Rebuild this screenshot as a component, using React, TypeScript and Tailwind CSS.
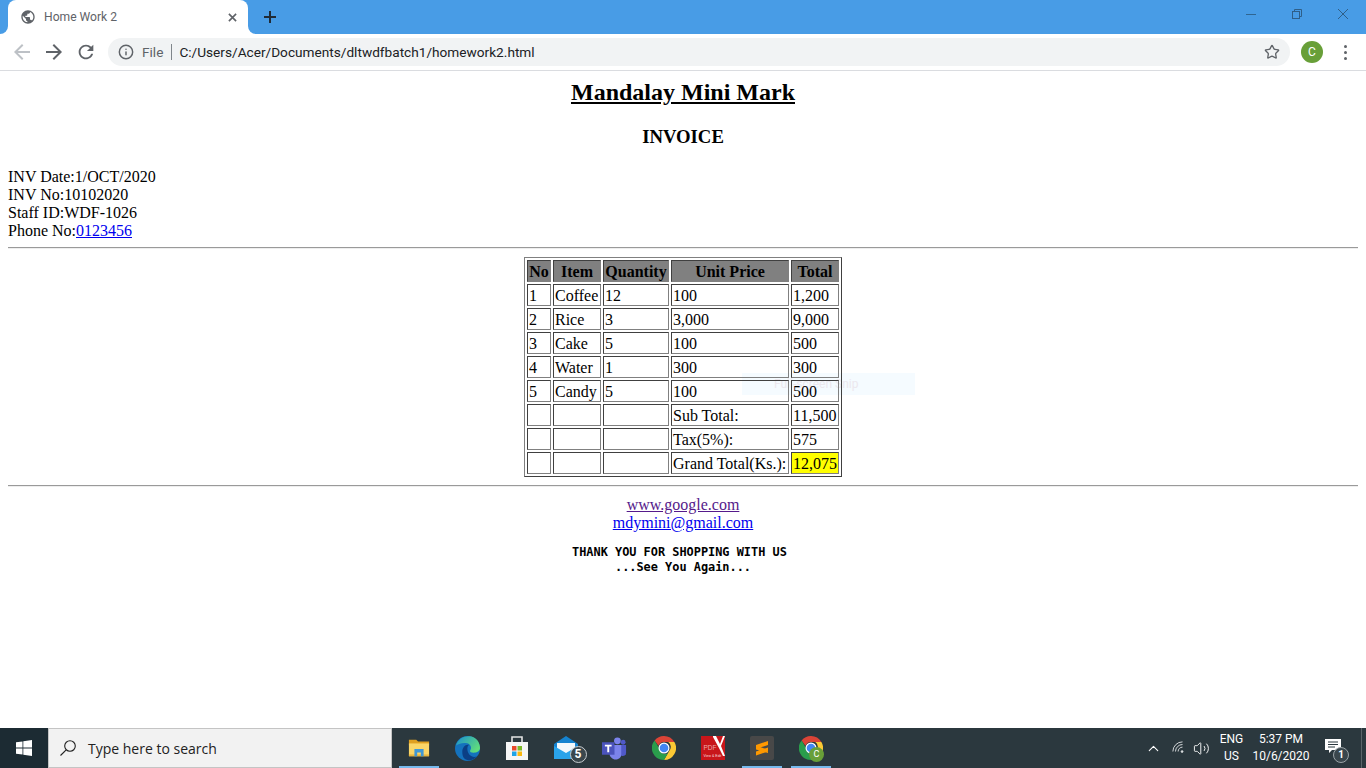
import { ChevronUp, Info, Star, Volume2 } from "lucide-react";
import type { ReactNode } from "react";

const rows = [
  ["1", "Coffee", "12", "100", "1,200"],
  ["2", "Rice", "3", "3,000", "9,000"],
  ["3", "Cake", "5", "100", "500"],
  ["4", "Water", "1", "300", "300"],
  ["5", "Candy", "5", "100", "500"],
  ["", "", "", "Sub Total:", "11,500"],
  ["", "", "", "Tax(5%):", "575"],
  ["", "", "", "Grand Total(Ks.):", "12,075"],
];

const cell = "border border-t-[#404040] border-l-[#404040] border-r-[#808080] border-b-[#808080] px-px pt-[2px] pb-0 h-[22px] whitespace-nowrap overflow-visible";
const columns = ["No", "Item", "Quantity", "Unit Price", "Total"];
const columnWidths = ["w-[24px]", "w-[48px]", "w-[66px]", "w-[118px]", "w-[48px]"];

function MaterialIcon({ d, className }: { d: string; className: string }) {
  return (
    <svg viewBox="0 0 24 24" className={className}>
      <path d={d} />
    </svg>
  );
}

function TitleBar() {
  return (
    <div className="h-[34px] bg-[#489ce6] flex items-end shrink-0 pl-[8px]">
      {/* Active tab, with the little flares at its foot */}
      <div className="relative w-[240px] h-[34px] bg-white rounded-t-lg flex items-center pl-[12px] pr-[8px] font-['Roboto',sans-serif] text-[12px] text-[#5f6368]">
        <div className="absolute -left-2 bottom-0 w-2 h-2 bg-white">
          <div className="w-full h-full bg-[#489ce6] rounded-br-lg" />
        </div>
        <div className="absolute -right-2 bottom-0 w-2 h-2 bg-white">
          <div className="w-full h-full bg-[#489ce6] rounded-bl-lg" />
        </div>
        <MaterialIcon
          className="w-4 h-4 fill-[#5f6368]"
          d="M12 2C6.48 2 2 6.48 2 12s4.48 10 10 10 10-4.48 10-10S17.52 2 12 2zm-1 17.93c-3.95-.49-7-3.85-7-7.93 0-.62.08-1.21.21-1.79L9 15v1c0 1.1.9 2 2 2v1.93zm6.9-2.54c-.26-.81-1-1.39-1.9-1.39h-1v-3c0-.55-.45-1-1-1H8v-2h2c.55 0 1-.45 1-1V7h2c1.1 0 2-.9 2-2v-.41c2.93 1.19 5 4.06 5 7.41 0 2.08-.8 3.97-2.1 5.39z"
        />
        <span className="ml-2 flex-1 text-[12.1px]">Home Work 2</span>
        <svg viewBox="0 0 10 10" className="w-[9px] h-[9px] stroke-[#5f6368] mr-[3px]" strokeWidth="1.8">
          <path d="M1 1l8 8M9 1L1 9" />
        </svg>
      </div>
      <div className="h-[34px] flex items-center ml-[16px]">
        <svg viewBox="0 0 12 12" className="w-[12px] h-[12px] stroke-[#202b36]" strokeWidth="2">
          <path d="M6 0v12M0 6h12" />
        </svg>
      </div>
      <div className="ml-auto h-[34px] flex items-start">
        <div className="w-[46px] h-[28px] flex items-center justify-center">
          <div className="w-[10px] h-px bg-[#2f6591]" />
        </div>
        <div className="w-[46px] h-[28px] flex items-center justify-center">
          <svg viewBox="0 0 10 10" className="w-[10px] h-[10px] fill-none stroke-[#2f5f88]">
            <rect x="0.5" y="2.5" width="7" height="7" />
            <path d="M2.5 2.5V.5h7v7h-2" />
          </svg>
        </div>
        <div className="w-[46px] h-[28px] flex items-center justify-center">
          <svg viewBox="0 0 10 10" className="w-[10px] h-[10px] fill-none stroke-[#2f5f88]">
            <path d="M0 0l10 10M10 0L0 10" />
          </svg>
        </div>
      </div>
    </div>
  );
}

function Toolbar() {
  return (
    <div className="h-[37px] bg-white border-b border-[#dadce0] flex items-center shrink-0 pl-[10px] pr-[13px]">
      <MaterialIcon className="w-6 h-6 fill-[#bdc1c6]" d="M20 11H7.83l5.59-5.59L12 4l-8 8 8 8 1.41-1.41L7.83 13H20v-2z" />
      <MaterialIcon className="w-6 h-6 ml-2 fill-[#5f6368]" d="M12 4l-1.41 1.41L16.17 11H4v2h12.17l-5.58 5.59L12 20l8-8z" />
      <MaterialIcon
        className="w-[22px] h-[22px] ml-[9px] fill-[#5f6368]"
        d="M17.65 6.35C16.2 4.9 14.21 4 12 4c-4.42 0-7.99 3.58-7.99 8s3.57 8 7.99 8c3.73 0 6.84-2.55 7.73-6h-2.08c-.82 2.33-3.04 4-5.65 4-3.31 0-6-2.69-6-6s2.69-6 6-6c1.66 0 3.14.69 4.22 1.78L13 11h7V4l-2.35 2.35z"
      />
      <div className="ml-[11px] flex-1 h-[28px] rounded-full bg-[#f1f3f4] flex items-center pl-[10px] pr-[10px] font-['Roboto',sans-serif] text-[13.65px]">
        <Info size={16} strokeWidth={2.2} className="text-[#5f6368]" />
        <span className="ml-[8px] text-[#5f6368]">File</span>
        <div className="w-px h-[16px] bg-[#80868b] mx-[8px]" />
        <span className="text-[#202124] -ml-px">C:/Users/Acer/Documents/dltwdfbatch1/homework2.html</span>
        <Star size={16} strokeWidth={2} className="ml-auto text-[#5f6368]" />
      </div>
      <div className="ml-[11px] w-[22px] h-[22px] rounded-full bg-[#689f38] text-white flex items-center justify-center font-['Roboto',sans-serif] text-[12px]">C</div>
      <div className="ml-[21px] flex flex-col gap-[3px] mr-[6px]">
        <span className="w-[3px] h-[3px] rounded-full bg-[#5f6368]" />
        <span className="w-[3px] h-[3px] rounded-full bg-[#5f6368]" />
        <span className="w-[3px] h-[3px] rounded-full bg-[#5f6368]" />
      </div>
    </div>
  );
}

function Invoice() {
  return (
    <div className="relative flex-1 bg-white text-black font-['Liberation_Serif',serif] text-[16px] leading-[18px] px-2 pt-2 overflow-hidden">
      <h2 className="text-center text-[24px] leading-[27px] font-bold underline">Mandalay Mini Mark</h2>
      <h3 className="text-center text-[18.72px] leading-[21px] font-bold mt-[20px]">INVOICE</h3>
      <div className="mt-[21px]">
        <div>INV Date:1/OCT/2020</div>
        <div>INV No:10102020</div>
        <div>Staff ID:WDF-1026</div>
        <div>Phone No:<a href="#" className="text-[#0000ee] underline">0123456</a></div>
      </div>
      <hr className="mt-[7px] border-t border-b border-t-[#9a9a9a] border-b-[#eeeeee]" />
      {/* Windows snipping toast fading out, sits behind the table text */}
      <div className="absolute left-[742px] top-[302px] w-[173px] h-[22px] bg-[#f5fbff] flex items-center pl-[32px] font-['Roboto',sans-serif] text-[12px] text-[#ece8ee]">
        Full-screen Snip
      </div>
      <table className="relative z-10 table-fixed w-[318px] mx-auto mt-[8px] border-separate border-spacing-[2px] border border-t-[#808080] border-l-[#808080] border-r-[#404040] border-b-[#404040]">
        <thead>
          <tr>
            {columns.map((h, i) => (
              <th key={h} className={`${cell} ${columnWidths[i]} bg-[#808080] font-bold text-center`}>{h}</th>
            ))}
          </tr>
        </thead>
        <tbody>
          {rows.map((r, i) => (
            <tr key={i}>
              {r.map((c, j) => (
                <td key={j} className={`${cell} text-left ${c === "12,075" ? "bg-[#ffff00]" : ""}`}>{c}</td>
              ))}
            </tr>
          ))}
        </tbody>
      </table>
      <hr className="mt-[8px] border-t border-b border-t-[#9a9a9a] border-b-[#eeeeee]" />
      <div className="text-center mt-[9px]">
        <div><a href="#" className="text-[#551a8b] underline">www.google.com</a></div>
        <div><a href="#" className="text-[#0000ee] underline">mdymini@gmail.com</a></div>
      </div>
      <pre className="text-center mt-[13px] font-['DejaVu_Sans_Mono',monospace] text-[11.9px] leading-[15px] font-bold">{"THANK YOU FOR SHOPPING WITH US \n...See You Again..."}</pre>
    </div>
  );
}

function Explorer() {
  return (
    <svg viewBox="0 0 24 24" className="w-[22px] h-[22px]">
      <path d="M1 3h8l2 2h12v4H1z" fill="#e0a020" />
      <path d="M1 7h22v14H1z" fill="#fbd668" />
      <path d="M1 19h22v2H1z" fill="#e8b53e" />
      <path d="M7 13h10v8h-3v-4h-4v4H7z" fill="#3f97d6" />
    </svg>
  );
}

function Edge() {
  return (
    <svg viewBox="0 0 24 24" className="w-[25px] h-[25px]">
      <defs>
        <linearGradient id="edge-top" x1="0" y1="0" x2="1" y2="0.6">
          <stop offset="0" stopColor="#1a8fd0" />
          <stop offset="1" stopColor="#5fdc7c" />
        </linearGradient>
      </defs>
      <circle cx="12" cy="12" r="12" fill="#1472bd" />
      <path d="M1 9C3 2 10-1 16 .5c5 1.500 8 6 8 11 0 3-3 4.500-6 4.500-4 0-4-1.500-3-3 1-2 0-5-3-6-4-1-8 0-11 2z" fill="url(#edge-top)" />
      <path d="M7 15c0-4 3-7.500 6.500-6.500C11 10 11 17 16 19.500c2 1 4 .5 5 0-3 4-9 5-12 2-1.500-1.500-2-4-2-6.500z" fill="#0b3f85" />
    </svg>
  );
}

function Store() {
  return (
    <svg viewBox="0 0 24 26" className="w-[24px] h-[26px]">
      <path d="M7 8V2h10v6" fill="none" stroke="#e4e4e4" strokeWidth="1.6" />
      <path d="M1 7h22v18H1z" fill="#f6f6f6" />
      <path d="M7 11h4.500v4.500H7z" fill="#e8492a" />
      <path d="M12.500 11H17v4.500h-4.500z" fill="#7cb928" />
      <path d="M7 16.500h4.500V21H7z" fill="#1ea4e8" />
      <path d="M12.500 16.500H17V21h-4.500z" fill="#fbb80f" />
    </svg>
  );
}

function Mail() {
  return (
    <div className="relative w-[26px] h-[24px]">
      <svg viewBox="0 0 26 24" className="w-[26px] h-[24px]">
        <path d="M1 8L13 0l12 8v15H1z" fill="#1583d0" />
        <path d="M4 7h18v8l-9 4-9-4z" fill="#f2f8fc" />
        <path d="M1 10l12 7 12-7v13H1z" fill="#2aa3ea" />
      </svg>
      <div className="absolute left-[17px] top-[10px] w-[17px] h-[17px] rounded-full bg-[#3a474d] border border-[#c8cdd0] text-white text-[12px] leading-[15px] text-center font-['Roboto',sans-serif] font-bold">5</div>
    </div>
  );
}

function Teams() {
  return (
    <svg viewBox="0 0 26 24" className="w-[25px] h-[24px]">
      <circle cx="16" cy="4.500" r="3.500" fill="#7b83eb" />
      <circle cx="22" cy="6" r="2.500" fill="#5059c9" />
      <path d="M18 9h7v8c0 3-3 4-5 3z" fill="#5059c9" />
      <path d="M8 9h12v10c0 3-3 5-6 5s-6-3-6-5z" fill="#7b83eb" />
      <path d="M0 6h13v13H0z" fill="#4b53bc" />
      <path d="M3 8.500h7v2H7.500v6h-2v-6H3z" fill="#fff" />
    </svg>
  );
}

function Chrome() {
  return (
    <svg viewBox="0 0 24 24" className="w-[24px] h-[24px]">
      <path d="M12 0a12 12 0 0 1 10.400 6H12a6 6 0 0 0-5.600 3.800L2.600 4.400A12 12 0 0 1 12 0z" fill="#db4437" />
      <path d="M22.400 6A12 12 0 0 1 12 24l5.200-9a6 6 0 0 0-1-9z" fill="#fcc934" />
      <path d="M2.600 4.400l5 8.600a5 5 0 0 0 9.600 2L12 24A12 12 0 0 1 2.600 4.400z" fill="#2a9d4c" />
      <circle cx="12" cy="12" r="5.500" fill="#fff" />
      <circle cx="12" cy="12" r="4.300" fill="#4285f4" />
    </svg>
  );
}

function PdfX() {
  return (
    <div className="relative w-[24px] h-[24px] bg-[#c8161a] overflow-hidden text-[6.5px] leading-none font-['Liberation_Sans',sans-serif] text-[#eda9a9]">
      <svg viewBox="0 0 24 24" className="absolute inset-0">
        <path d="M12 0h3l4 8 3-8h2l-4 10 4 10h-2l-4-8-6-11z" fill="#fff" />
      </svg>
      <span className="absolute left-[3px] top-[9px]">PDF</span>
      <span className="absolute left-[3px] bottom-[2px] text-[3.5px] text-[#f7dcdc]">View &amp; Edit</span>
    </div>
  );
}

function Sublime() {
  return (
    <div className="w-[24px] h-[24px] rounded-[2px] bg-[#484848] flex items-center justify-center">
      <svg viewBox="0 0 14 16" className="w-[14px] h-[16px]">
        <path d="M13 1v4L1 9V5zM1 6l12 3.500V13L1 9.500zM13 7.500v4L1 15.500v-4z" fill="#ff9800" />
      </svg>
    </div>
  );
}

function TaskIcon({ active, children }: { active?: boolean; children: ReactNode }) {
  return (
    <div className="relative w-[49px] h-[40px] flex items-center justify-center">
      {children}
      {active && <div className="absolute left-[5px] bottom-0 w-[40px] h-[2px] bg-[#76b9ed]" />}
    </div>
  );
}

function Taskbar() {
  return (
    <div className="h-[40px] bg-[#2b383e] flex items-stretch shrink-0 text-white font-['Open_Sans',sans-serif]">
      <div className="w-[48px] bg-[#1c2b33] flex items-center justify-center">
        <svg viewBox="0 0 16 16" className="w-[16px] h-[16px] fill-white">
          <path d="M0 2.300l6.500-.9v6.200H0zM7.300 1.300L16 0v7.600H7.300zM0 8.400h6.500v6.200L0 13.700zM7.300 8.400H16V16l-8.700-1.200z" />
        </svg>
      </div>
      <div className="w-[344px] bg-[#f2f2f2] border border-[#c4c4c4] flex items-center pl-[11px] text-[#222] text-[14px]">
        <svg viewBox="0 0 16 16" className="w-[16px] h-[16px] fill-none stroke-[#222]" strokeWidth="1.1">
          <circle cx="10" cy="6" r="5.300" />
          <path d="M6.200 9.800L.5 15.500" />
        </svg>
        <span className="ml-[12px]">Type here to search</span>
      </div>
      <div className="flex pl-[2px]">
        <TaskIcon active><Explorer /></TaskIcon>
        <TaskIcon><Edge /></TaskIcon>
        <TaskIcon><Store /></TaskIcon>
        <TaskIcon><Mail /></TaskIcon>
        <TaskIcon><Teams /></TaskIcon>
        <TaskIcon><Chrome /></TaskIcon>
        <TaskIcon><PdfX /></TaskIcon>
        <TaskIcon active><Sublime /></TaskIcon>
        <TaskIcon active>
          <Chrome />
          <div className="absolute left-[23px] top-[19px] w-[15px] h-[15px] rounded-full bg-[#689f38] text-white text-[9px] leading-[15px] text-center font-['Roboto',sans-serif]">C</div>
        </TaskIcon>
      </div>
      <div className="ml-auto flex items-center text-[12px] font-['Roboto',sans-serif]">
        <ChevronUp size={17} strokeWidth={1.5} />
        <svg viewBox="0 0 16 16" className="w-[14px] h-[14px] ml-[10px] fill-none stroke-[#d8dcde]" strokeWidth="1.1">
          <path d="M1 12a11 11 0 0 1 11-11M4 12a8 8 0 0 1 8-8M7 12a5 5 0 0 1 5-5" />
          <circle cx="11.5" cy="12" r="1" className="fill-white" />
        </svg>
        <Volume2 size={17} strokeWidth={1.3} className="ml-[7px]" />
        <div className="ml-[5px] w-[33px] text-center leading-[17px] flex flex-col">
          <span>ENG</span>
          <span>US</span>
        </div>
        <div className="ml-[2px] w-[62px] text-center leading-[17px] flex flex-col">
          <span>5:37 PM</span>
          <span>10/6/2020</span>
        </div>
        <div className="relative w-[41px] h-[40px] flex items-center justify-center">
          <svg viewBox="0 0 16 16" className="w-[16px] h-[16px] fill-white -translate-y-[2px]">
            <path d="M0 1h16v11H7l-3 3v-3H0z" />
            <path d="M3 4h10M3 6.500h10M3 9h7" stroke="#2b383e" />
          </svg>
          <div className="absolute left-[21px] top-[19px] w-[16px] h-[16px] rounded-full bg-[#3a474d] border border-[#9aa3a7] text-[10px] leading-[14px] text-center font-bold">1</div>
        </div>
        <div className="w-px h-full bg-[#5a6569] ml-[8px] mr-[4px]" />
      </div>
    </div>
  );
}

export default function App() {
  return (
    <div className="w-[1366px] h-[768px] flex flex-col overflow-hidden">
      <TitleBar />
      <Toolbar />
      <Invoice />
      <Taskbar />
    </div>
  );
}
